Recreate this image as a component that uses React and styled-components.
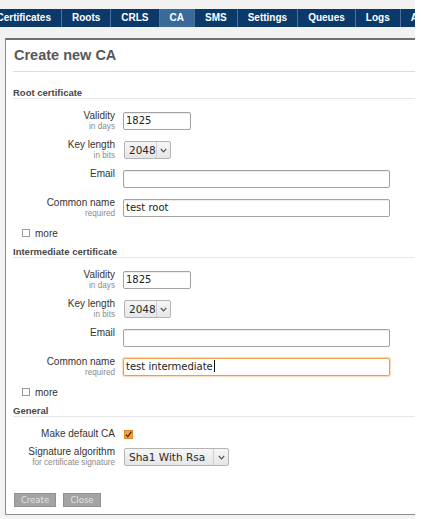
import React from "react";
import styled, { createGlobalStyle } from "styled-components";

const GlobalStyle = createGlobalStyle`
  html, body { margin: 0; padding: 0; background: #ffffff; }
  body { font-family: "Liberation Sans", Arial, sans-serif; }
  svg { display: block; }
`;

const Page = styled.div`
  width: 415px;
  height: 519px;
  overflow: hidden;
  background: #f2f2f2;
  padding-top: 9px;
  box-sizing: border-box;
`;

const TabBar = styled.nav`
  display: flex;
  flex-wrap: nowrap;
  height: 18px;
  background: #0b3a6a;
  margin-left: -13.5px;
  margin-bottom: 11px;
`;

const Tab = styled.div`
  flex: none;
  padding: 0 10px;
  border-right: 1px solid #4d729b;
  background: ${(p) => (p.$active ? "#3a6a9b" : "transparent")};
  color: #ffffff;
  font: bold 10px/18px "Liberation Sans", Arial, sans-serif;
  white-space: nowrap;
`;

const Panel = styled.section`
  margin-left: 5px;
  background: #ffffff;
  border-left: 1px solid #8c8c8c;
  border-top: 2px solid #6f6f6f;
  border-bottom: 1px solid #8c8c8c;
  padding: 0 0 7px 7px;
`;

const Heading = styled.h1`
  margin: 0;
  padding: 6px 0 7px 1px;
  font: bold 14.5px/18px "Liberation Sans", Arial, sans-serif;
  color: #585858;
  border-bottom: 1px solid #dedede;
`;

const SectionTitle = styled.h2`
  margin: ${(p) => (p.$first ? "15px" : "6px")} 0 13px 0;
  font: bold 9.5px/11px "Liberation Sans", Arial, sans-serif;
  color: #484848;
  border-bottom: 1px solid #e6e6e6;
`;

const Row = styled.div`
  display: flex;
  align-items: flex-start;
  gap: 8px;
  height: ${(p) => p.$h || 18}px;
  margin-bottom: 11px;
`;

const Label = styled.div`
  width: 102px;
  flex: none;
  margin-top: -2px;
  text-align: right;
  color: #333333;
  font: 10px/12px "Liberation Sans", Arial, sans-serif;
`;

const Hint = styled.div`
  color: #8a8a8a;
  font: 8.2px/9px "Liberation Sans", Arial, sans-serif;
  white-space: nowrap;
`;

const Field = styled.div`
  box-sizing: border-box;
  width: ${(p) => p.$w}px;
  height: 18px;
  padding: 0 2px;
  border: 1px solid ${(p) => (p.$focus ? "#e9a04c" : "#a2a2a2")};
  border-radius: 2px;
  background: #ffffff;
  box-shadow: ${(p) =>
    p.$focus ? "0 0 1px 1px rgba(240, 170, 90, 0.45)" : "inset 0 1px 1px rgba(0,0,0,0.08)"};
  color: #222222;
  font: 10px/16px "DejaVu Sans", sans-serif;
  white-space: nowrap;
`;

const Caret = styled.span`
  display: inline-block;
  width: 1px;
  height: 12px;
  margin-left: 1px;
  vertical-align: -2px;
  background: #111111;
`;

const Select = styled.div`
  box-sizing: border-box;
  display: flex;
  width: ${(p) => p.$w}px;
  height: 18px;
  margin-left: 1px;
  border: 1px solid #b4b4b4;
  border-radius: 2px;
  background: linear-gradient(#f6f6f6, #e6e6e6);
  color: #2a2a2a;
  font: 10.5px/16px "DejaVu Sans", sans-serif;
`;

const SelectValue = styled.span`
  flex: 1;
  padding-left: 4px;
  white-space: nowrap;
`;

const SelectArrow = styled.span`
  flex: none;
  width: 14px;
  display: flex;
  align-items: center;
  justify-content: center;
  border-left: 1px solid #cfcfcf;
`;

const MoreRow = styled.label`
  display: flex;
  align-items: center;
  gap: 5px;
  height: 12px;
  margin-left: 9px;
  color: #333333;
  font: 10px/12px "Liberation Sans", Arial, sans-serif;
`;

const Box = styled.span`
  box-sizing: border-box;
  width: 8px;
  height: 8px;
  border: 1px solid #9a9a9a;
  background: #ffffff;
  margin-top: -2px;
`;

const CheckMark = styled.span`
  display: block;
  width: 9px;
  height: 9px;
  margin-left: 1px;
`;

const Buttons = styled.div`
  display: flex;
  gap: 7px;
  margin: 27px 0 0 1px;
`;

const Button = styled.button`
  height: 14px;
  width: ${(p) => p.$w}px;
  padding: 0;
  border: 1px solid #8f8f8f;
  background: #a3a3a3;
  color: #e2e2e2;
  font: 8.5px/12px "DejaVu Sans", sans-serif;
  cursor: pointer;
`;

const Chevron = () => (
  <svg width="7" height="5" viewBox="0 0 7 5">
    <path d="M0.8 1 L3.5 3.8 L6.2 1" fill="none" stroke="#555" strokeWidth="1.2" />
  </svg>
);

const tabs = ["Certificates", "Roots", "CRLS", "CA", "SMS", "Settings", "Queues", "Logs", "About"];

function CertificateSection({ title, first, name, focus }) {
  return (
    <>
      <SectionTitle $first={first}>{title}</SectionTitle>
      <Row>
        <Label>
          Validity
          <Hint>in days</Hint>
        </Label>
        <Field $w={68}>1825</Field>
      </Row>
      <Row>
        <Label>
          Key length
          <Hint>in bits</Hint>
        </Label>
        <Select $w={47}>
          <SelectValue>2048</SelectValue>
          <SelectArrow>
            <Chevron />
          </SelectArrow>
        </Select>
      </Row>
      <Row>
        <Label>Email</Label>
        <Field $w={267} />
      </Row>
      <Row>
        <Label>
          Common name
          <Hint>required</Hint>
        </Label>
        <Field $w={267} $focus={focus}>
          {name}
          {focus && <Caret />}
        </Field>
      </Row>
      <MoreRow>
        <Box />
        more
      </MoreRow>
    </>
  );
}

export default function App() {
  return (
    <>
      <GlobalStyle />
      <Page>
        <TabBar>
          {tabs.map((t) => (
            <Tab key={t} $active={t === "CA"}>
              {t}
            </Tab>
          ))}
        </TabBar>
        <Panel>
          <Heading>Create new CA</Heading>
          <CertificateSection title="Root certificate" first name="test root" />
          <CertificateSection title="Intermediate certificate" name="test intermediate" focus />
          <SectionTitle>General</SectionTitle>
          <Row $h={7}>
            <Label>Make default CA</Label>
            <CheckMark>
              <svg width="9" height="9" viewBox="0 0 9 9">
                <rect x="0.5" y="0.5" width="8" height="8" fill="#f4a33c" stroke="#d88a2c" />
                <path d="M2 4.6 L3.8 6.6 L7.4 1.6" fill="none" stroke="#5a3000" strokeWidth="1.4" />
              </svg>
            </CheckMark>
          </Row>
          <Row>
            <Label>
              Signature algorithm
              <Hint>for certificate signature</Hint>
            </Label>
            <Select $w={105}>
              <SelectValue>Sha1 With Rsa</SelectValue>
              <SelectArrow>
                <Chevron />
              </SelectArrow>
            </Select>
          </Row>
          <Buttons>
            <Button $w={42}>Create</Button>
            <Button $w={38}>Close</Button>
          </Buttons>
        </Panel>
      </Page>
    </>
  );
}
